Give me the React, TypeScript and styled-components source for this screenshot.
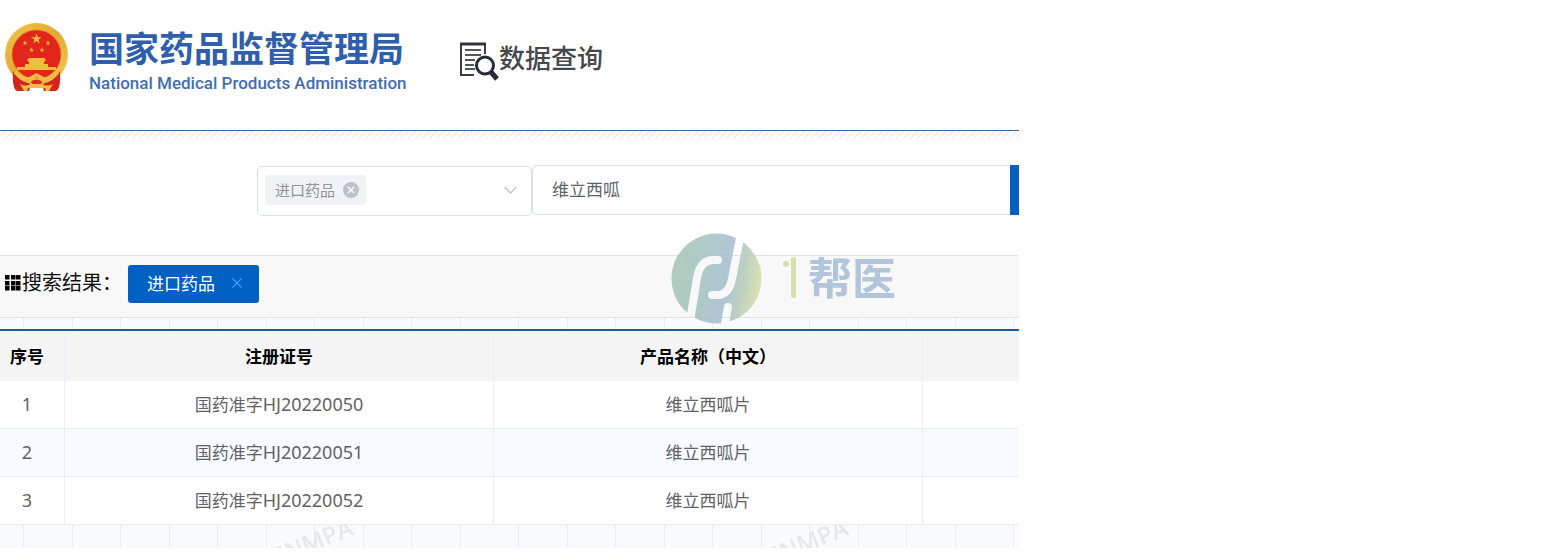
import React from "react";
import styled, { createGlobalStyle } from "styled-components";

const GlobalStyle = createGlobalStyle`
  *, *::before, *::after { box-sizing: border-box; }
  body {
    margin: 0;
    background: #fff;
    color: #606266;
    font-family: "Noto Sans CJK SC", "Noto Sans", sans-serif;
    font-size: 17px;
  }
  button, input, select { font: inherit; margin: 0; }
`;

const Page = styled.div`
  position: relative;
  width: 65.53%;
  overflow: hidden;
`;

const Header = styled.header`
  display: flex;
  align-items: flex-start;
  height: 131px;
  padding: 22px 0 0 4px;
  border-bottom: 1px solid #2c6aa8;
  white-space: nowrap;
`;

const HomeLink = styled.a`
  display: flex;
  gap: 20px;
  color: #2f5fac;
  text-decoration: none;
`;

const Names = styled.span`
  display: flex;
  flex-direction: column;
  width: 318px;
  padding-top: 2px;
`;

const ChineseName = styled.span`
  font-size: 35px;
  font-weight: 700;
  line-height: 46px;
`;

const EnglishName = styled.span`
  color: #416db4;
  font-family: Roboto, "Liberation Sans", sans-serif;
  font-size: 17px;
  font-weight: 500;
  line-height: 26px;
`;

const Section = styled.h1`
  display: flex;
  align-items: flex-start;
  margin: 15px 0 0 52px;
  color: #48484c;
  font-size: 26px;
  font-weight: 500;
  line-height: 40px;
  svg { margin-top: 5px; }
`;

const Hatch = styled.div`
  height: 8px;
  background: repeating-linear-gradient(135deg, #fff 0 3px, #e3e8ee 4px, #fff 5px);
`;

const SearchForm = styled.form`
  display: flex;
  align-items: flex-start;
  padding: 26px 0 39px 257px;
`;

const Picker = styled.div`
  display: flex;
  align-items: center;
  width: 275px;
  height: 50px;
  margin-top: 1px;
  padding: 0 14px 2px 7px;
  border: 1px solid #dcdfe6;
  border-radius: 5px;
`;

const Chip = styled.span`
  display: flex;
  align-items: center;
  gap: 8px;
  height: 30px;
  padding: 0 7px 0 10px;
  border-radius: 4px;
  background: #f0f2f5;
  color: #909399;
  font-size: 15px;
  line-height: 30px;
`;

const IconButton = styled.button`
  display: flex;
  padding: 0;
  border: 0;
  background: none;
  cursor: pointer;
`;

const PickerSelect = styled.select`
  flex: 1;
  min-width: 0;
  height: 30px;
  border: 0;
  background: none;
  appearance: none;
`;

const Keyword = styled.input`
  flex: 1;
  min-width: 0;
  height: 50px;
  padding: 0 19px 3px;
  border: 1px solid #dcdfe6;
  border-right-width: 0;
  border-radius: 5px 0 0 5px;
  background: #fff;
  color: #606266;
`;

const SubmitButton = styled.button`
  width: 10px;
  height: 50px;
  padding: 0;
  border: 0;
  border-left: 1px solid #fff;
  background: #0060c4;
`;

const ResultBar = styled.div`
  display: flex;
  align-items: center;
  gap: 1px;
  height: 63px;
  padding: 0 0 8px 5px;
  border-top: 1px solid #e2e2e2;
  border-bottom: 1px solid #e2e2e2;
  background: #f8f8f8;
`;

const ResultLabel = styled.h2`
  margin: 0;
  padding-bottom: 2px;
  color: #111;
  font-size: 20px;
  font-weight: 400;
  line-height: 30px;
`;

const ResultTag = styled.span`
  display: flex;
  align-items: center;
  gap: 17px;
  height: 38px;
  margin: 2px 0 0 5px;
  padding: 0 17px 2px 19px;
  border-radius: 3px;
  background: #0060c4;
  color: #fff;
  line-height: 36px;
`;

const GridStrip = styled.div<{ $tall?: boolean }>`
  height: ${(p) => (p.$tall ? 23 : 11)}px;
  overflow: hidden;
  background: #f9fafe;
  svg { display: block; }
`;

const Table = styled.table`
  width: 100%;
  table-layout: fixed;
  border-collapse: separate;
  border-spacing: 0;
  border-top: 2px solid #1d5b9c;
  text-align: center;
`;

const IndexCol = styled.col`
  width: 65px;
`;

const DataCol = styled.col`
  width: 42.1%;
`;

const HeadCell = styled.th`
  height: 50px;
  padding: 0 10px 1px;
  border-right: 1px solid #ebeef5;
  background: #f4f4f4;
  color: #000;
  font-weight: 700;
  line-height: 24px;
  white-space: nowrap;
  &:first-child { padding-left: 0; }
  &:last-child { border-right: 0; }
`;

const Row = styled.tr<{ $striped: boolean }>`
  background: ${(p) => (p.$striped ? "#f7faff" : "#fff")};
`;

const Cell = styled.td`
  height: 48px;
  padding: 0 10px 2px;
  border-right: 1px solid #ebeef5;
  border-bottom: 1px solid #e8edf3;
  line-height: 24px;
  &:first-child { padding-left: 0; }
  &:last-child { border-right: 0; }
`;

const Latin = styled.span`
  font-family: "Noto Sans", sans-serif;
  font-size: 18px;
`;

const Brand = styled.div`
  position: absolute;
  top: 233px;
  left: 671px;
  display: flex;
  align-items: flex-start;
  gap: 9px;
  opacity: 0.85;
  pointer-events: none;
`;

const BrandName = styled.span`
  color: #a6bdd6;
  font-size: 44px;
  font-weight: 700;
  line-height: 86px;
`;

function Emblem() {
  const star = "M0-1 .23-.31.95-.31.36.12.59.81 0 .38-.59.81-.36.12-.95-.31-.23-.31Z";
  return (
    <svg width="65" height="70" viewBox="0 0 65 70" aria-hidden="true">
      <defs>
        <linearGradient id="gold" x1="0" y1="0" x2="1" y2="1">
          <stop offset="0" stopColor="#f3c64d" />
          <stop offset=".5" stopColor="#e5a932" />
          <stop offset="1" stopColor="#f6cf5d" />
        </linearGradient>
      </defs>
      <circle cx="32.500" cy="32.500" r="31.500" fill="url(#gold)" />
      <circle cx="32.500" cy="32.500" r="24.500" fill="#e3261c" stroke="#c98a20" strokeWidth=".7" />
      <circle cx="32.500" cy="32.500" r="28.500" fill="none" stroke="#e0a838" strokeWidth="1" strokeDasharray="2 3" />
      <g fill="#f1bd3f">
        <path d={star} transform="translate(32.500 17) scale(5.500)" />
        <path d={star} transform="translate(21 21) scale(2.700)" />
        <path d={star} transform="translate(44 21) scale(2.700)" />
        <path d={star} transform="translate(27.500 28) scale(2.700)" />
        <path d={star} transform="translate(38 28) scale(2.700)" />
        <path d="M23 38 25 36H40L42 38 40 40V42H44V45H50V48H14V45H21V42H25V40ZM13 45H52V48H13Z" />
      </g>
      <path d="M9 49Q15 60 27 62L25 69H13Q8 67 9 49ZM56 49Q50 60 38 62L40 69H52Q57 67 56 49Z" fill="#d5241a" />
      <path d="M11 50Q20 60 27 56L32.500 53 38 56Q45 60 54 50" fill="none" stroke="#efbd45" strokeWidth="3.500" />
      <path d="M25 60Q32.500 53 40 60L36 64H29Z" fill="#e3261c" stroke="#efbd45" strokeWidth="2" />
      <path d="M16 62Q22 65 27 62H38Q43 65 49 62L45 69H42L41 66H24L23 69H20Z" fill="#efbd45" />
    </svg>
  );
}

function QueryIcon() {
  return (
    <svg width="40" height="40" viewBox="0 0 40 40" fill="none" aria-hidden="true">
      <path d="M26 12V2H2V33H15" stroke="#3a3a42" strokeWidth="2" />
      <path d="M1 2H27" stroke="#34343c" strokeWidth="3" />
      <path d="M6 8H22M6 13H22M6 18H16M6 23H15M6 27H16" stroke="#55555c" strokeWidth="2" />
      <circle cx="26" cy="23.500" r="8.500" fill="#fff" stroke="#2a2a38" strokeWidth="3" />
      <path d="M32 30 38 37" stroke="#2a2a38" strokeWidth="5" />
    </svg>
  );
}

function ChipClose() {
  return (
    <svg width="16" height="16" viewBox="0 0 16 16" aria-hidden="true">
      <circle cx="8" cy="8" r="8" fill="#bcc0c8" />
      <path d="M4.800 4.800 11.200 11.200M11.200 4.800 4.800 11.200" stroke="#fff" strokeWidth="1.300" />
    </svg>
  );
}

function Chevron() {
  return (
    <svg width="13" height="8" viewBox="0 0 13 8" fill="none" aria-hidden="true">
      <path d="M.5 1 6.500 7 12.500 1" stroke="#c0c4cc" strokeWidth="1.300" />
    </svg>
  );
}

function TilesIcon() {
  const steps = [0, 6, 11];
  return (
    <svg width="16" height="16" viewBox="0 0 16 16" aria-hidden="true">
      {steps.map((y) => steps.map((x) => <rect key={`${x}-${y}`} x={x} y={y} width="4.500" height="4.500" fill="#000" />))}
    </svg>
  );
}

function TagClose() {
  return (
    <svg width="10" height="10" viewBox="0 0 10 10" aria-hidden="true">
      <path d="M.5.5 9.500 9.500M9.500.5.5 9.500" stroke="#409eff" strokeWidth="1.100" />
    </svg>
  );
}

function GridLines({ id, marked }: { id: string; marked?: boolean }) {
  return (
    <svg width="100%" height="24" aria-hidden="true">
      <defs>
        <pattern id={id} width="495" height="24" patternUnits="userSpaceOnUse">
          {Array.from({ length: 10 }, (_, i) => (
            <rect key={i} x={Math.round(23 + i * 48.5)} width="1" height="24" fill="#e9ebf0" />
          ))}
          {marked && (
            <text
              transform="translate(276 41) rotate(-22)"
              fontFamily="Open Sans, sans-serif"
              fontSize="24"
              fontWeight="600"
              fill="#e6e7ea"
            >
              ENMPA
            </text>
          )}
        </pattern>
      </defs>
      <rect width="100%" height="24" fill={`url(#${id})`} />
    </svg>
  );
}

function BrandMark() {
  return (
    <svg width="128" height="91" viewBox="0 0 128 91" aria-hidden="true">
      <defs>
        <linearGradient id="brand" x1="0" y1=".4" x2="1" y2=".55">
          <stop offset="0" stopColor="#a3c6b0" />
          <stop offset=".3" stopColor="#a3c2bf" />
          <stop offset=".6" stopColor="#a3bdd0" />
          <stop offset=".78" stopColor="#b2c9ba" />
          <stop offset="1" stopColor="#d6dfa3" />
        </linearGradient>
        <mask id="strokes">
          <rect width="91" height="91" fill="#fff" />
          <g fill="none" stroke="#000" strokeWidth="8" strokeLinecap="round">
            <path d="M18 94 26 45Q29 27 43 27H47" />
            <path d="M70 0 61 46Q58 62 46 62H41" />
            <path d="M57 74 53 96" />
          </g>
        </mask>
      </defs>
      <circle cx="45.500" cy="45.500" r="45" fill="url(#brand)" mask="url(#strokes)" />
      <g fill="#cfde9f">
        <circle cx="115" cy="31" r="3" />
        <rect x="120" y="24" width="5" height="41" rx="2" />
      </g>
    </svg>
  );
}

const rows = [
  { code: "HJ20220050", name: "维立西呱片" },
  { code: "HJ20220051", name: "维立西呱片" },
  { code: "HJ20220052", name: "维立西呱片" },
];

export default function App() {
  return (
    <>
      <GlobalStyle />
      <Page>
        <Header>
          <HomeLink href="#">
            <Emblem />
            <Names>
              <ChineseName>国家药品监督管理局</ChineseName>
              <EnglishName>National Medical Products Administration</EnglishName>
            </Names>
          </HomeLink>
          <Section>
            <QueryIcon />
            数据查询
          </Section>
        </Header>
        <Hatch />
        <SearchForm onSubmit={(e) => e.preventDefault()}>
          <Picker>
            <Chip>
              进口药品
              <IconButton type="button" aria-label="移除进口药品">
                <ChipClose />
              </IconButton>
            </Chip>
            <PickerSelect aria-label="药品类别" defaultValue="">
              <option value="" />
            </PickerSelect>
            <Chevron />
          </Picker>
          <Keyword type="text" aria-label="关键词" defaultValue="维立西呱" />
          <SubmitButton type="submit" aria-label="搜索" />
        </SearchForm>
        <ResultBar>
          <TilesIcon />
          <ResultLabel>搜索结果：</ResultLabel>
          <ResultTag>
            进口药品
            <IconButton type="button" aria-label="关闭进口药品">
              <TagClose />
            </IconButton>
          </ResultTag>
        </ResultBar>
        <GridStrip>
          <GridLines id="grid-top" />
        </GridStrip>
        <Table>
          <colgroup>
            <IndexCol />
            <DataCol />
            <DataCol />
            <col />
          </colgroup>
          <thead>
            <tr>
              <HeadCell>序号</HeadCell>
              <HeadCell>注册证号</HeadCell>
              <HeadCell>产品名称（中文）</HeadCell>
              <HeadCell />
            </tr>
          </thead>
          <tbody>
            {rows.map((row, i) => (
              <Row key={row.code} $striped={i % 2 === 1}>
                <Cell>
                  <Latin>{i + 1}</Latin>
                </Cell>
                <Cell>
                  国药准字<Latin>{row.code}</Latin>
                </Cell>
                <Cell>{row.name}</Cell>
                <Cell />
              </Row>
            ))}
          </tbody>
        </Table>
        <GridStrip $tall>
          <GridLines id="grid-bottom" marked />
        </GridStrip>
        <Brand>
          <BrandMark />
          <BrandName>帮医</BrandName>
        </Brand>
      </Page>
    </>
  );
}
